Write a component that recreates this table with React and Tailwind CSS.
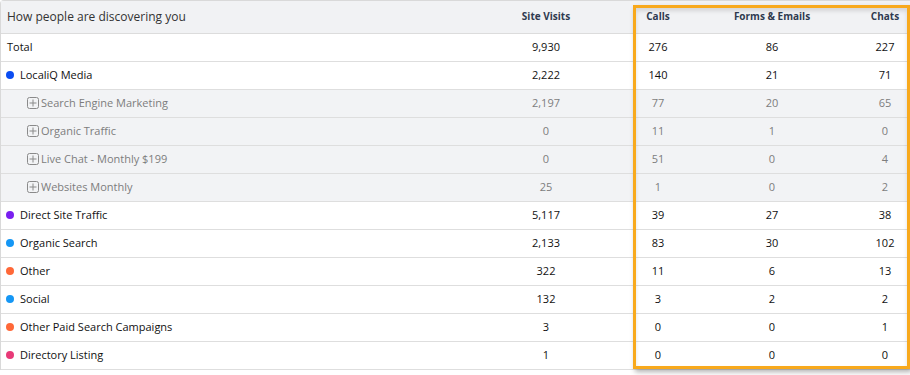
import React from 'react';

const rows = [
  { name: 'Total', visits: '9,930', calls: '276', forms: '86', chats: '227' },
  { name: 'LocaliQ Media', dot: 'bg-[#0b4df2]', visits: '2,222', calls: '140', forms: '21', chats: '71' },
  { name: 'Search Engine Marketing', sub: true, visits: '2,197', calls: '77', forms: '20', chats: '65' },
  { name: 'Organic Traffic', sub: true, visits: '0', calls: '11', forms: '1', chats: '0' },
  { name: 'Live Chat - Monthly $199', sub: true, visits: '0', calls: '51', forms: '0', chats: '4' },
  { name: 'Websites Monthly', sub: true, visits: '25', calls: '1', forms: '0', chats: '2' },
  { name: 'Direct Site Traffic', dot: 'bg-[#7a1ff0]', visits: '5,117', calls: '39', forms: '27', chats: '38' },
  { name: 'Organic Search', dot: 'bg-[#1597f5]', visits: '2,133', calls: '83', forms: '30', chats: '102' },
  { name: 'Other', dot: 'bg-[#ff6838]', visits: '322', calls: '11', forms: '6', chats: '13' },
  { name: 'Social', dot: 'bg-[#1597f5]', visits: '132', calls: '3', forms: '2', chats: '2' },
  { name: 'Other Paid Search Campaigns', dot: 'bg-[#ff6838]', visits: '3', calls: '0', forms: '0', chats: '1' },
  { name: 'Directory Listing', dot: 'bg-[#e83a78]', visits: '1', calls: '0', forms: '0', chats: '0' },
];

const grid = 'grid grid-cols-[488px_114px_110px_118px_80px]';

const PlusBox = () => (
  <svg width="12" height="12" viewBox="0 0 12 12" className="shrink-0">
    <rect x="0.5" y="0.5" width="11" height="11" rx="2" fill="none" stroke="#8a8a8a" strokeWidth="1" />
    <path d="M6 2.5v7M2.5 6h7" stroke="#8a8a8a" strokeWidth="1" />
  </svg>
);

const Row = ({ r }) => (
  <div
    className={`${grid} h-[28px] pb-[1px] items-center border-b border-[#dedede] text-[11px] ${
      r.sub ? 'bg-[#f2f3f5] text-[#7d7d7d]' : 'bg-white text-[#111]'
    }`}
  >
    <div className="flex items-center">
      {r.sub ? (
        <div className="flex items-center gap-[2px] pl-[26px]">
          <PlusBox />
          <span>{r.name}</span>
        </div>
      ) : r.dot ? (
        <div className="flex items-center gap-[6px] pl-[5px]">
          <span className={`w-2 h-2 rounded-full ${r.dot}`} />
          <span>{r.name}</span>
        </div>
      ) : (
        <span className="pl-[6px]">{r.name}</span>
      )}
    </div>
    <div className="text-center">{r.visits}</div>
    <div className="text-center">{r.calls}</div>
    <div className="text-center">{r.forms}</div>
    <div className="text-center pl-[28px]">{r.chats}</div>
  </div>
);

export default function App() {
  return (
    <div
      className="relative w-[910px] h-[375px] bg-white overflow-hidden"
      style={{ fontFamily: '"Open Sans", "Noto Sans", sans-serif' }}
    >
      <div className="border-t border-l border-[#d9d9d9] rounded-tl-[4px]">
        <div className={`${grid} h-[33px] pb-[1px] items-center bg-[#f1f2f4] border-b border-[#dcdcdc]`}>
          <div className="pl-[6px] text-[12px] text-[#333]">How people are discovering you</div>
          <div className="text-center text-[10px] font-bold text-[#2f3a4f]">Site Visits</div>
          <div className="text-center text-[10px] font-bold text-[#2f3a4f]">Calls</div>
          <div className="text-center text-[10px] font-bold text-[#2f3a4f]">Forms &amp; Emails</div>
          <div className="text-center pl-[28px] text-[10px] font-bold text-[#2f3a4f]">Chats</div>
        </div>
        {rows.map((r) => (
          <Row key={r.name} r={r} />
        ))}
      </div>

      {/* highlight box over the engagement columns */}
      <div className="absolute left-[633px] top-[5px] w-[277px] h-[364px] border-[3px] border-[#f8a91c] shadow-[2px_3px_5px_rgba(0,0,0,0.3),inset_0_3px_4px_rgba(0,0,0,0.12)] pointer-events-none" />
    </div>
  );
}
